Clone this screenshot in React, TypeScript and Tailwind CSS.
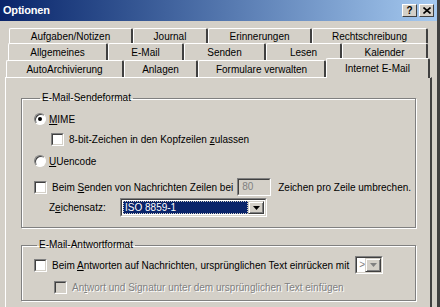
import React from 'react';

const tabRows: { label: string; w: number }[][] = [
  [
    { label: 'Aufgaben/Notizen', w: 124 },
    { label: 'Journal', w: 75 },
    { label: 'Erinnerungen', w: 104 },
    { label: 'Rechtschreibung', w: 116 },
  ],
  [
    { label: 'Allgemeines', w: 100 },
    { label: 'E-Mail', w: 76 },
    { label: 'Senden', w: 82 },
    { label: 'Lesen', w: 76 },
    { label: 'Kalender', w: 86 },
  ],
  [
    { label: 'AutoArchivierung', w: 118 },
    { label: 'Anlagen', w: 74 },
    { label: 'Formulare verwalten', w: 128 },
  ],
];

const Tab = ({ label, w, h }: { label: string; w: number; h: string }) => (
  <div
    className={`${h} shrink-0 flex items-center justify-center border-t border-l border-white border-r-2 border-r-[#404040] rounded-tl-[2px] rounded-tr-[2px]`}
    style={{ width: w }}
  >
    {label}
  </div>
);

const CheckBox = ({ disabled = false }: { disabled?: boolean }) => (
  <span className="w-[13px] h-[13px] shrink-0 border border-t-[#808080] border-l-[#808080] border-r-white border-b-white">
    <span
      className={`block w-full h-full border border-t-[#404040] border-l-[#404040] border-r-[#d4d0c8] border-b-[#d4d0c8] ${
        disabled ? 'bg-[#d4d0c8]' : 'bg-white'
      }`}
    />
  </span>
);

const Radio = ({ checked = false }: { checked?: boolean }) => (
  <span className="w-[12px] h-[12px] shrink-0 rounded-full bg-white border border-t-[#808080] border-l-[#808080] border-r-white border-b-white flex items-center justify-center shadow-[inset_1px_1px_0_#404040]">
    {checked && <span className="w-[4px] h-[4px] rounded-full bg-black" />}
  </span>
);

const ArrowButton = ({ disabled = false }: { disabled?: boolean }) => (
  <span className="w-[16px] h-full shrink-0 bg-[#d4d0c8] border border-t-[#d4d0c8] border-l-[#d4d0c8] border-r-[#404040] border-b-[#404040] shadow-[inset_1px_1px_0_white,inset_-1px_-1px_0_#808080] flex items-center justify-center">
    <svg width="7" height="4" viewBox="0 0 7 4">
      <path d="M0 0h7L3.5 4z" fill={disabled ? '#808080' : '#000'} />
    </svg>
  </span>
);

export default function App() {
  return (
    <div className="w-[440px] h-[307px] overflow-hidden bg-[#d4d0c8] text-black text-[10px] whitespace-nowrap font-['Liberation_Sans',Arial,sans-serif] flex flex-col border-r-[3px] border-r-[#404040]">
      {/* title bar */}
      <div className="h-[21px] shrink-0 bg-gradient-to-r from-[#0a246a] to-[#a6caf0] flex items-center pl-[3px] pr-[3px]">
        <span className="text-white font-bold text-[11px] tracking-[-0.2px]">Optionen</span>
        <div className="ml-auto flex gap-[2px]">
          <span className="w-[15px] h-[13px] bg-[#d4d0c8] border border-t-white border-l-white border-r-[#404040] border-b-[#404040] flex items-center justify-center font-bold text-[10px] leading-none">
            ?
          </span>
          <span className="w-[15px] h-[13px] bg-[#d4d0c8] border border-t-white border-l-white border-r-[#404040] border-b-[#404040] flex items-center justify-center">
            <svg width="8" height="7" viewBox="0 0 8 7">
              <path d="M0.5 0.5L7.5 6.5M7.5 0.5L0.5 6.5" stroke="#000" strokeWidth="1.6" />
            </svg>
          </span>
        </div>
      </div>

      {/* tabs */}
      <div className="pt-[7px] flex flex-col">
        <div className="flex ml-[9px]">
          {tabRows[0].map((t) => (
            <Tab key={t.label} label={t.label} w={t.w} h="h-[15px]" />
          ))}
        </div>
        <div className="flex ml-[8px]">
          {tabRows[1].map((t) => (
            <Tab key={t.label} label={t.label} w={t.w} h="h-[17px]" />
          ))}
        </div>
        <div className="flex items-end ml-[6px] h-[17px]">
          {tabRows[2].map((t) => (
            <Tab key={t.label} label={t.label} w={t.w} h="h-[17px]" />
          ))}
          <div className="relative z-10 w-[104px] h-[20px] mb-[-1px] shrink-0 bg-[#d4d0c8] flex items-start justify-center pt-[2px] border-t border-l border-white border-r-2 border-r-[#404040] rounded-tl-[2px] rounded-tr-[2px]">
            Internet E-Mail
          </div>
        </div>
      </div>

      {/* panel */}
      <div className="ml-[5px] w-[427px] flex-1 border-t border-l border-white border-r-2 border-r-[#404040] pl-[15px] pr-[14px] pt-[14px]">
        <fieldset className="border border-[#808080] shadow-[1px_1px_0_white,inset_1px_1px_0_white] pl-[12px] pb-[10px]">
          <legend className="ml-[6px] px-[2px] leading-[12px]">E-Mail-Sendeformat</legend>
          <div className="flex items-center gap-[3px] h-[14px] mt-[8px]">
            <Radio checked />
            <span>
              <u>M</u>IME
            </span>
          </div>
          <div className="flex items-center gap-[5px] h-[14px] mt-[6px] ml-[17px]">
            <CheckBox />
            <span>
              8-bit-Zeichen in den Kopfzeilen <u>z</u>ulassen
            </span>
          </div>
          <div className="flex items-center gap-[3px] h-[14px] mt-[8px]">
            <Radio />
            <span>
              <u>U</u>Uencode
            </span>
          </div>
          <div className="flex items-center h-[18px] mt-[10px]">
            <CheckBox />
            <span className="ml-[5px]">
              Beim <u>S</u>enden von Nachrichten Zeilen bei
            </span>
            <span className="ml-[4px] w-[34px] h-[18px] border border-t-[#808080] border-l-[#808080] border-r-white border-b-white">
              <span className="block h-full border border-t-[#404040] border-l-[#404040] border-r-[#d4d0c8] border-b-[#d4d0c8] pl-[3px] leading-[14px] text-[#808080]">
                80
              </span>
            </span>
            <span className="ml-[7px]">Zeichen pro Zeile umbrechen.</span>
          </div>
          <div className="flex items-center h-[19px] mt-[2px] ml-[15px]">
            <span className="w-[71px]">
              Z<u>e</u>ichensatz:
            </span>
            <span className="w-[147px] h-[19px] flex border border-t-[#808080] border-l-[#808080] border-r-white border-b-white">
              <span className="flex-1 flex border border-t-[#404040] border-l-[#404040] border-r-[#d4d0c8] border-b-[#d4d0c8] bg-white p-[1px]">
                <span className="flex-1 bg-[#0a246a] text-white leading-[13px] pl-[2px] outline-1 outline-dotted outline-offset-[-1px] outline-[#d4d0c8]">
                  ISO 8859-1
                </span>
                <ArrowButton />
              </span>
            </span>
          </div>
        </fieldset>

        <fieldset className="mt-[11px] border border-[#808080] shadow-[1px_1px_0_white,inset_1px_1px_0_white] pl-[12px] pb-[6px]">
          <legend className="ml-[3px] px-[2px] leading-[12px]">E-Mail-Antwortformat</legend>
          <div className="flex items-center h-[18px] mt-[5px]">
            <CheckBox />
            <span className="ml-[5px]">
              Beim <u>A</u>ntworten auf Nachrichten, ursprünglichen Text einrücken mit
            </span>
            <span className="ml-[6px] w-[28px] h-[18px] flex border border-t-[#808080] border-l-[#808080] border-r-white border-b-white">
              <span className="flex-1 flex border border-t-[#404040] border-l-[#404040] border-r-[#d4d0c8] border-b-[#d4d0c8] bg-white">
                <span className="flex-1 text-[#808080] leading-[14px] pl-[2px]">&gt;</span>
                <ArrowButton disabled />
              </span>
            </span>
          </div>
          <div className="flex items-center h-[14px] mt-[6px] ml-[20px]">
            <CheckBox disabled />
            <span className="ml-[5px] text-[#808080] [text-shadow:1px_1px_0_white]">
              An<u>t</u>wort und Signatur unter dem ursprünglichen Text einfügen
            </span>
          </div>
        </fieldset>
      </div>
    </div>
  );
}
